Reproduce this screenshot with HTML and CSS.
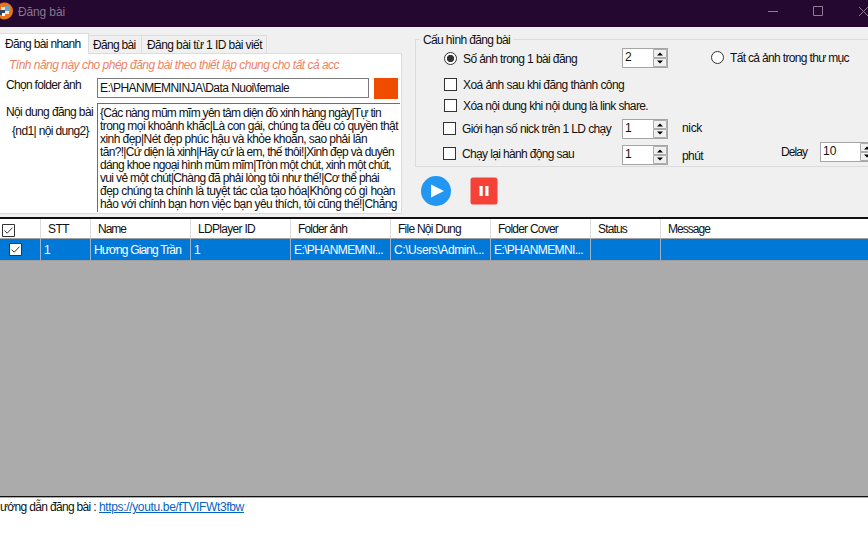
FILE: index.html
```
<!DOCTYPE html>
<html lang="vi">
<head>
<meta charset="utf-8">
<title>Đăng bài</title>
<link rel="stylesheet" href="styles.css">
</head>
<body>
<header class="titlebar">
  <svg class="app-icon" viewBox="0 0 18 18">
    <circle cx="4.500" cy="9" r="8.500" fill="#e8741c"/>
    <path d="M1 5h4v4H1z" fill="#d9e6ef"/><path d="M5 4h5v6H5z" fill="#6fa3c4"/><path d="M0 8h5v5H0z" fill="#34435c"/><path d="M5 9h4v3H5z" fill="#f2e6da"/><path d="M2 11h3v3H2z" fill="#fff"/>
  </svg>
  <span class="title">Đăng bài</span>
  <svg class="window-buttons" viewBox="0 0 100 22" fill="none" stroke="#8d7b94">
    <path d="M0 11.500h10M45.500 6.500h9v9h-9zM91 7l9 9M100 7l-9 9"/>
  </svg>
</header>
<main class="top">
  <section class="tabs">
    <nav class="tab-bar">
      <div class="tab active">Đăng bài nhanh</div>
      <div class="tab second">Đăng bài</div>
      <div class="tab third">Đăng bài từ 1 ID bài viết</div>
    </nav>
    <div class="page">
      <div class="hint">Tính năng này cho phép đăng bài theo thiết lập chung cho tất cả acc</div>
      <div class="folder">
        <label class="folder-label">Chọn folder ảnh</label>
        <div class="path"><span>E:\PHANMEMNINJA\Data Nuoi\female</span></div>
        <div class="browse"></div>
      </div>
      <div class="content">
        <div class="content-label">
          <div class="label-main">Nội dung đăng bài</div>
          <div class="label-format">{nd1| nội dung2}</div>
        </div>
        <div class="textarea">
          <div class="line l1">{Các nàng mũm mĩm yên tâm diện đồ xinh hàng ngày|Tự tin</div>
          <div class="line l2">trong mọi khoảnh khắc|Là con gái, chúng ta đều có quyền thật</div>
          <div class="line l3">xinh đẹp|Nét đẹp phúc hậu và khỏe khoắn, sao phải lăn</div>
          <div class="line l4">tăn?!|Cứ diện là xinh|Hãy cứ là em, thế thôi!|Xinh đẹp và duyên</div>
          <div class="line l5">dáng khoe ngoại hình mũm mĩm|Tròn một chút, xinh một chút,</div>
          <div class="line l6">vui vẻ một chút|Chàng đã phải lòng tôi như thế!|Cơ thể phái</div>
          <div class="line l7">đẹp chúng ta chính là tuyệt tác của tạo hóa|Không có gì hoàn</div>
          <div class="line l8">hảo với chính bạn hơn việc bạn yêu thích, tôi cũng thế!|Chẳng</div>
        </div>
      </div>
    </div>
  </section>
  <section class="right">
    <div class="group">
      <div class="legend"><span>Cấu hình đăng bài</span></div>
      <div class="row r-count">
        <i class="radio on"></i><span class="text">Số ảnh trong 1 bài đăng</span>
        <div class="spin"><b>2</b><svg class="arrows" viewBox="0 0 14 18"><path class="face" d="M.5.500h13v8H.5zM.5 9.500h13v8H.5z"/><path d="M4 6.500h6L7 3.500zM4 11.500h6l-3 3z"/></svg></div>
        <i class="radio"></i><span class="text all-images">Tất cả ảnh trong thư mục</span>
      </div>
      <div class="row r-delete"><i class="check"></i><span class="text">Xoá ảnh sau khi đăng thành công</span></div>
      <div class="row r-share"><i class="check"></i><span class="text">Xóa nội dung khi nội dung là link share.</span></div>
      <div class="row r-limit">
        <i class="check"></i><span class="text">Giới hạn số nick trên 1 LD chạy</span>
        <div class="spin"><b>1</b><svg class="arrows" viewBox="0 0 14 18"><path class="face" d="M.5.500h13v8H.5zM.5 9.500h13v8H.5z"/><path d="M4 6.500h6L7 3.500zM4 11.500h6l-3 3z"/></svg></div>
        <span class="unit nick">nick</span>
      </div>
      <div class="row r-repeat">
        <i class="check"></i><span class="text">Chạy lại hành động sau</span>
        <div class="spin"><b>1</b><svg class="arrows" viewBox="0 0 14 18"><path class="face" d="M.5.500h13v8H.5zM.5 9.500h13v8H.5z"/><path d="M4 6.500h6L7 3.500zM4 11.500h6l-3 3z"/></svg></div>
        <span class="unit minute">phút</span>
        <span class="delay">Delay</span>
        <div class="spin wide"><b>10</b><svg class="arrows" viewBox="0 0 14 18"><path class="face" d="M.5.500h13v8H.5zM.5 9.500h13v8H.5z"/><path d="M4 6.500h6L7 3.500zM4 11.500h6l-3 3z"/></svg></div>
      </div>
    </div>
    <div class="actions">
      <svg class="play" viewBox="0 0 30 30"><circle cx="15" cy="15" r="15" fill="#2196f3"/><path d="M10 8.500v13L23 15z" fill="#fff"/></svg>
      <svg class="pause" viewBox="0 0 28 28"><rect x=".5" y=".5" width="27" height="27" rx="2.500" fill="#f44336"/><path d="M9.500 9h3.200v10H9.500zM15.300 9h3.200v10h-3.200z" fill="#fff"/></svg>
    </div>
  </section>
</main>
<section class="grid">
  <div class="tr head">
    <div class="cell"><svg class="tick head-tick" viewBox="0 0 13 13"><path class="box" d="M.5.500h12v12H.5z"/><path d="M2.500 6.500l2.700 2.700 5.300-5.500"/></svg></div>
    <div class="cell stt">STT</div><div class="cell name">Name</div><div class="cell ld">LDPlayer ID</div><div class="cell folder-img">Folder ảnh</div><div class="cell file">File Nội Dung</div><div class="cell cover">Folder Cover</div><div class="cell status">Status</div><div class="cell message">Message</div>
  </div>
  <div class="tr selected">
    <div class="cell"><svg class="tick row-tick" viewBox="0 0 13 13"><path class="box" d="M.5.500h12v12H.5z"/><path d="M2.500 6.500l2.700 2.700 5.300-5.500"/></svg></div>
    <div class="cell">1</div><div class="cell person">Hương Giang Trần</div><div class="cell">1</div><div class="cell drive">E:\PHANMEMNI...</div><div class="cell users">C:\Users\Admin\...</div><div class="cell drive">E:\PHANMEMNI...</div><div class="cell"></div><div class="cell"></div>
  </div>
</section>
<footer class="footer"><span class="guide">ướng dẫn đăng bài :</span><a class="link">https://youtu.be/fTVIFWt3fbw</a></footer>
</body>
</html>
```
FILE: styles.css
```
* { box-sizing: border-box; }
body { margin: 0; width: 868px; height: 558px; overflow: hidden; display: flex; flex-direction: column; background: #fff; color: #111; font: 12px/14px "Liberation Sans", Arial, sans-serif; white-space: nowrap; }
svg { display: block; flex: none; }

.titlebar { flex: none; height: 27px; display: flex; align-items: flex-start; background: #25082f; color: #87768e; }
.app-icon { width: 18px; height: 18px; margin-top: 2px; }
.title { margin-top: 5px; letter-spacing: -.13px; }
.window-buttons { width: 100px; height: 22px; margin-left: auto; }

.top { flex: none; height: 190px; display: flex; background: #f0f0f0; }
.tabs { flex: none; width: 402px; padding-top: 6px; }
.tab-bar { height: 20px; display: flex; align-items: flex-end; }
.tab { height: 18px; padding: 2px 0 0 4px; border: 1px solid #dcdcdc; border-width: 1px 1px 0 0; background: #f0f0f0; }
.tab.active { position: relative; width: 89px; height: 21px; margin-bottom: -1px; padding: 3px 0 0 5px; background: #fff; letter-spacing: -.66px; }
.tab.second { width: 53px; letter-spacing: -.69px; }
.tab.third { width: 125px; padding-left: 5px; letter-spacing: -.58px; }
.page { height: 161px; border: 1px solid #dcdcdc; border-left: 0; background: #fff; padding-top: 4px; }
.hint { height: 20px; padding-left: 9px; color: #ee8264; font-style: italic; letter-spacing: -.51px; }
.folder { display: flex; height: 25px; }
.folder-label { width: 97px; padding-left: 6px; letter-spacing: -.69px; }
.path { width: 272px; height: 20px; border: 1px solid #7a7a7a; padding: 2px 0 0 2px; letter-spacing: -.55px; }
.browse { width: 24px; height: 21px; margin-left: 5px; background: #f04c00; }
.content { display: flex; }
.content-label { flex: none; width: 97px; padding-left: 6px; }
.label-main { padding-top: 2px; letter-spacing: -.61px; }
.label-format { padding: 5px 0 0 6px; letter-spacing: -.64px; }
.textarea { width: 303px; height: 109px; border: 1px solid #6e6e6e; border-width: 1px 0 0 1px; padding: 3px 0 0 2px; }
.line { height: 13px; line-height: 13px; }
.l1 { letter-spacing: -.709px; } .l2 { letter-spacing: -.556px; }
.l3 { letter-spacing: -.547px; } .l4 { letter-spacing: -.682px; }
.l5 { letter-spacing: -.675px; } .l6 { letter-spacing: -.655px; }
.l7 { letter-spacing: -.528px; } .l8 { letter-spacing: -.559px; }

.right { flex: none; width: 466px; padding: 12px 0 0 13px; }
.group { height: 128px; border: 1px solid #dcdcdc; border-right: 0; }
.legend { height: 9px; padding-left: 4px; margin-top: -7px; margin-bottom: 6px; letter-spacing: -.65px; }
.legend span { background: #f0f0f0; padding: 0 3px; }
.row { display: flex; align-items: flex-start; padding-left: 28px; }
.row > * { flex: none; }
.radio, .check { width: 13px; height: 13px; border: 1px solid #333; background: #fff; }
.radio { border-radius: 50%; }
.radio.on { background: radial-gradient(circle, #333 3.300px, #fff 4px); }
.text { margin-left: 6px; width: 159px; }
.spin { width: 46px; height: 20px; border: 1px solid #a5a5a5; background: #fff; display: flex; padding-left: 2px; }
.spin b { flex: 1; font-weight: normal; padding-top: 1px; letter-spacing: 0; }
.spin.wide { width: 55px; }
.arrows { width: 14px; height: 18px; }
.face { fill: #f0f0f0; stroke: #adadad; }
.r-count { height: 28px; letter-spacing: -.61px; }
.r-count .radio { margin-top: 4px; }
.r-count .text { margin-top: 4px; }
.r-count .spin { margin-top: 0; }
.r-count .spin + .radio { margin: 3px 0 0 43px; }
.r-count .all-images { width: 130px; margin-top: 3px; letter-spacing: -.66px; }
.r-delete { height: 21px; padding-top: 2px; letter-spacing: -.57px; }
.r-share { height: 22px; padding-top: 2px; letter-spacing: -.61px; }
.r-limit { height: 26px; letter-spacing: -.61px; padding-left: 27px; }
.r-limit .check, .r-limit .text { margin-top: 3px; }
.r-limit .spin { margin-left: 1px; }
.r-repeat { height: 26px; letter-spacing: -.64px; padding-left: 27px; }
.r-repeat .check, .r-repeat .text { margin-top: 2px; }
.r-repeat .spin { margin-left: 1px; }
.unit { margin-left: 14px; }
.nick { margin-top: 2px; letter-spacing: -.33px; }
.minute { width: 99px; margin-top: 4px; letter-spacing: -.59px; }
.delay { width: 38px; letter-spacing: -.9px; }
.r-repeat .wide { margin-top: -3px; }
.actions { display: flex; padding: 9px 0 0 6px; }
.play { width: 30px; height: 30px; }
.pause { width: 28px; height: 28px; margin: 1px 0 0 19px; }

.grid { flex: none; height: 280px; background: #ababab; border-top: 2px solid #111; border-bottom: 1px solid #111; }
.tr { display: grid; grid-template-columns: 41px 50px 100px 100px 100px 100px 100px 70px 207px; height: 22px; }
.cell { border-right: 1px solid #dcdcdc; border-bottom: 1px solid #a0a0a0; padding: 4px 0 0 3px; overflow: hidden; }
.head { height: 20px; background: #fff; }
.head .cell { padding: 3px 0 0 7px; }
.tr .cell:first-child { padding-left: 0; }
.tr .cell:last-child { border-right: 0; }
.selected { background: #0078d7; color: #fff; }
.selected .cell { border-color: #a0b4c8; border-bottom-color: #a0a0a0; }
.tick { width: 13px; height: 13px; fill: none; stroke: #333; }
.tick .box { fill: #fff; }
.head-tick { margin: 2px 0 0 2px; }
.row-tick { margin-left: 9px; }
.stt { letter-spacing: -.56px; } .name { letter-spacing: -1px; }
.ld { letter-spacing: -.7px; } .folder-img { letter-spacing: -.84px; }
.file { letter-spacing: -.75px; } .cover { letter-spacing: -.78px; }
.status { letter-spacing: -.84px; } .message { letter-spacing: -.96px; }
.person { letter-spacing: -.85px; } .drive { letter-spacing: -.6px; } .users { letter-spacing: -.41px; }

.footer { flex: 1; display: flex; padding-top: 2px; border-top: 1px solid #aaa; }
.guide { width: 99px; letter-spacing: -.67px; }
.link { color: #0563c1; text-decoration: underline; letter-spacing: -.35px; }
```
